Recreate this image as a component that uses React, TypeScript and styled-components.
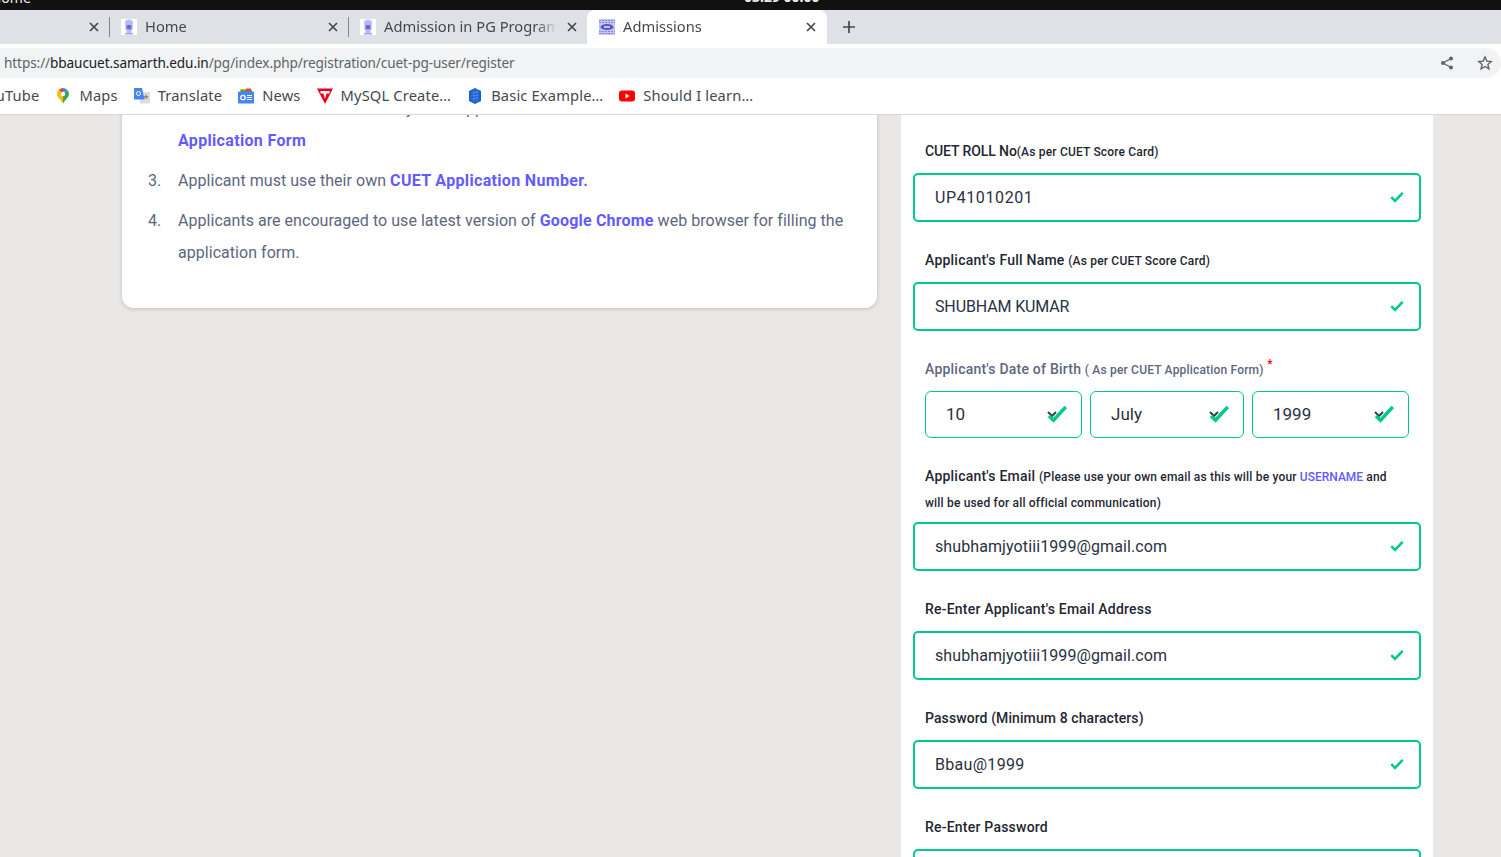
import React from "react";
import styled, { createGlobalStyle } from "styled-components";

const GlobalStyle = createGlobalStyle`
  html, body {
    margin: 0;
    padding: 0;
    height: 100%;
    overflow: hidden;
    background: #e9e8e6;
  }
  * { box-sizing: border-box; }
`;

const UI_FONT = `"Noto Sans", "Open Sans", sans-serif`;
const PAGE_FONT = `"Roboto", "Noto Sans", sans-serif`;
const GREEN = "#00c98d";

/* icons */
const CollegeIcon = () => (
  <svg width="16" height="16" viewBox="0 0 16 16">
    <rect width="16" height="16" fill="#fff" />
    <ellipse cx="8" cy="4" rx="4" ry="3.500" fill="#b9baf2" />
    <rect x="4.500" y="6" width="7" height="5" fill="#a3a4ee" />
    <circle cx="8" cy="8" r="2.200" fill="#6667d2" />
    <rect x="5.500" y="11" width="5" height="3" fill="#b9baf2" />
    <rect x="4" y="14" width="8" height="1.500" fill="#a3a4ee" />
  </svg>
);

const AdmissionsIcon = () => (
  <svg width="16" height="16" viewBox="0 0 16 16">
    <rect width="16" height="16" fill="#c4c5f3" />
    <path d="M0 1.500h16M0 3.500h16M0 12.500h16M0 14.500h16" stroke="#8788e0" strokeWidth="1" strokeDasharray="2 1" />
    <ellipse cx="8" cy="8" rx="6.500" ry="3" fill="#5556c6" />
    <rect x="5" y="7.200" width="6" height="1.600" fill="#dcdcf8" />
  </svg>
);

const CloseIcon = () => (
  <svg width="10" height="10" viewBox="0 0 10 10">
    <path d="M1 1l8 8M9 1l-8 8" stroke="#45494e" strokeWidth="1.700" fill="none" />
  </svg>
);

const PlusIcon = () => (
  <svg width="12" height="12" viewBox="0 0 12 12">
    <path d="M6 0v12M0 6h12" stroke="#45494e" strokeWidth="1.700" fill="none" />
  </svg>
);

const ShareIcon = () => (
  <svg width="14" height="14" viewBox="0 0 14 14">
    <path d="M11 2.500L3 7l8 4.500" stroke="#5f6368" strokeWidth="1.300" fill="none" />
    <circle cx="11" cy="2.500" r="2" fill="#5f6368" />
    <circle cx="3" cy="7" r="2" fill="#5f6368" />
    <circle cx="11" cy="11.500" r="2" fill="#5f6368" />
  </svg>
);

const StarIcon = () => (
  <svg width="16" height="16" viewBox="0 0 16 16">
    <path
      d="M8 2l1.800 4.100 4.400.4-3.300 2.900 1 4.400L8 11.500l-3.900 2.300 1-4.400L1.800 6.500l4.400-.4z"
      stroke="#5f6368"
      strokeWidth="1.400"
      fill="none"
    />
  </svg>
);

const MapsIcon = () => (
  <svg width="16" height="16" viewBox="0 0 16 16">
    <path d="M8 16C6.500 12 2 9.500 2 6a6 6 0 0 1 1.800-4.300L8 6z" fill="#fbbc04" />
    <path d="M8 16c1.500-4 6-6.500 6-10a6 6 0 0 0-1.800-4.300L8 6z" fill="#34a853" />
    <path d="M3.800 1.700A6 6 0 0 1 8 0v6z" fill="#ea4335" />
    <path d="M8 0a6 6 0 0 1 4.200 1.700L8 6z" fill="#4285f4" />
    <circle cx="8" cy="6" r="2.200" fill="#fff" />
  </svg>
);

const TranslateIcon = () => (
  <svg width="16" height="16" viewBox="0 0 16 16">
    <rect x="6" y="4" width="10" height="11.500" fill="#dadce0" />
    <path d="M0 0h8l2.500 11.500H0z" fill="#4285f4" />
    <path d="M12 6l.8 2h2l-1.500 1.300.5 2-1.800-1.200-1.800 1.200.5-2L9.200 8h2z" fill="#80868b" />
    <circle cx="4.500" cy="5.500" r="2" stroke="#fff" strokeWidth="1" fill="none" />
  </svg>
);

const NewsIcon = () => (
  <svg width="16" height="16" viewBox="0 0 16 16">
    <path d="M2 1h7v4H2z" fill="#fbbc04" />
    <path d="M3 2h11v3H3z" fill="#34a853" />
    <path d="M8 0.500h5v3H8z" fill="#ea4335" />
    <rect y="3.500" width="16" height="12" rx="1" fill="#4285f4" />
    <circle cx="5" cy="9.500" r="2.200" stroke="#fff" strokeWidth="1.300" fill="none" />
    <path d="M9 7.500h5M9 9.500h5M9 11.500h5" stroke="#fff" strokeWidth="1.100" />
  </svg>
);

const VivaldiTIcon = () => (
  <svg width="16" height="16" viewBox="0 0 16 16">
    <path d="M0 0.500h16L8 16z" fill="#e8001c" />
    <path d="M3.500 3h9v2.500H9.500L8 11 6.500 5.500h-3z" fill="#fff" />
  </svg>
);

const CubeIcon = () => (
  <svg width="16" height="16" viewBox="0 0 16 16">
    <path d="M8 0l6 3v10l-6 3-6-3V3z" fill="#1a5fd0" />
    <path d="M4 5l8-1M4 8l8-1M4 11l8-1M7 2v12M10 2v12" stroke="#6b9be8" strokeWidth=".6" />
  </svg>
);

const YoutubeIcon = () => (
  <svg width="16" height="16" viewBox="0 0 16 16">
    <rect y="2.500" width="16" height="11" rx="3" fill="#f00" />
    <path d="M6.500 5.500l4 2.500-4 2.500z" fill="#fff" />
  </svg>
);

const InputCheck = () => (
  <CheckSlot>
    <svg width="14" height="12" viewBox="0 0 14 12">
      <path d="M1.300 6.200l3.700 3.700 7.700-8" stroke={GREEN} strokeWidth="2.600" fill="none" />
    </svg>
  </CheckSlot>
);

const SelectCheck = () => (
  <svg width="21" height="19" viewBox="0 0 21 19">
    <path d="M2 8l4 4 4-4" stroke="#34404e" strokeWidth="2" fill="none" />
    <path d="M3 12l4.500 4.200L19.800 3" stroke={GREEN} strokeWidth="3.600" fill="none" />
  </svg>
);

/* data */
const tabs = [
  { title: "", icon: null },
  { title: "Home", icon: <CollegeIcon /> },
  { title: "Admission in PG Programme", icon: <CollegeIcon /> },
];

const bookmarks = [
  { title: "YouTube", icon: null },
  { title: "Maps", icon: <MapsIcon /> },
  { title: "Translate", icon: <TranslateIcon /> },
  { title: "News", icon: <NewsIcon /> },
  { title: "MySQL Create…", icon: <VivaldiTIcon /> },
  { title: "Basic Example…", icon: <CubeIcon /> },
  { title: "Should I learn…", icon: <YoutubeIcon /> },
];

const App = () => {
  return (
    <Page>
      <GlobalStyle />
      <SystemBar>
        <SystemTitle>Home</SystemTitle>
        <SystemClock>03:29 00:00</SystemClock>
      </SystemBar>

      <TabStrip>
        {tabs.map((tab, i) => (
          <Tab key={i}>
            <TabIcon>{tab.icon}</TabIcon>
            <TabTitle>{tab.title}</TabTitle>
            <TabClose><CloseIcon /></TabClose>
          </Tab>
        ))}
        <ActiveTab>
          <TabIcon><AdmissionsIcon /></TabIcon>
          <TabTitle>Admissions</TabTitle>
          <TabClose><CloseIcon /></TabClose>
        </ActiveTab>
        <NewTab><PlusIcon /></NewTab>
      </TabStrip>

      <AddressRow>
        <AddressPill>
          <Url>
            <UrlScheme>https://</UrlScheme>
            <UrlHost>bbaucuet.samarth.edu.in</UrlHost>
            /pg/index.php/registration/cuet-pg-user/register
          </Url>
          <AddressActions>
            <ShareIcon />
            <StarIcon />
          </AddressActions>
        </AddressPill>
      </AddressRow>

      <BookmarkBar>
        {bookmarks.map((b) => (
          <Bookmark key={b.title}>
            {b.icon}
            <span>{b.title}</span>
          </Bookmark>
        ))}
      </BookmarkBar>

      <Viewport>
        <InfoCard>
          <InfoList>
            <InfoItem $num="2.">
              Details entered should be exactly as in Applicant's CUET
              <br />
              <Strong>Application Form</Strong>
            </InfoItem>
            <InfoItem $num="3.">
              Applicant must use their own <Strong>CUET Application Number.</Strong>
            </InfoItem>
            <InfoItem $num="4.">
              Applicants are encouraged to use latest version of <Strong $narrow>Google Chrome</Strong> web browser for filling the application form.
            </InfoItem>
          </InfoList>
        </InfoCard>

        <FormCard>
          <Label><Caps>CUET ROLL No</Caps><Small>(As per CUET Score Card)</Small></Label>
          <Field>
            <FieldValue $ls={0.6}>UP41010201</FieldValue>
            <InputCheck />
          </Field>

          <Label>Applicant's Full Name <Small>(As per CUET Score Card)</Small></Label>
          <Field>
            <FieldValue $ls={-0.13}>SHUBHAM KUMAR</FieldValue>
            <InputCheck />
          </Field>

          <Label $muted>
            Applicant's Date of Birth <Small>( As per CUET Application Form)</Small> <Required>*</Required>
          </Label>
          <DateRow>
            <DateSelect $width={157}>
              <span>10</span>
              <SelectCheck />
            </DateSelect>
            <DateSelect $width={154}>
              <span>July</span>
              <SelectCheck />
            </DateSelect>
            <DateSelect $width={157}>
              <span>1999</span>
              <SelectCheck />
            </DateSelect>
          </DateRow>

          <Label $tight>
            Applicant's Email <Small>(Please use your own email as this will be your <Accent>USERNAME</Accent> and<br />will be used for all official communication)</Small>
          </Label>
          <Field>
            <FieldValue>shubhamjyotiii1999@gmail.com</FieldValue>
            <InputCheck />
          </Field>

          <Label>Re-Enter Applicant's Email Address</Label>
          <Field>
            <FieldValue>shubhamjyotiii1999@gmail.com</FieldValue>
            <InputCheck />
          </Field>

          <Label $narrow>Password (Minimum 8 characters)</Label>
          <Field>
            <FieldValue $ls={0.3}>Bbau@1999</FieldValue>
            <InputCheck />
          </Field>

          <Label>Re-Enter Password</Label>
          <Field />
        </FormCard>
      </Viewport>
    </Page>
  );
};

export default App;

/* styles */
const Page = styled.div`
  width: 1501px;
  height: 857px;
  overflow: hidden;
  display: flex;
  flex-direction: column;
  background: #e9e8e6;
`;

const SystemBar = styled.div`
  height: 10px;
  flex: none;
  background: #111;
  position: relative;
  overflow: hidden;
  color: #eee;
  font: 700 14px/14px ${UI_FONT};
`;

const SystemTitle = styled.span`
  position: absolute;
  left: -9px;
  top: -9px;
  font-weight: 400;
`;

const SystemClock = styled.span`
  position: absolute;
  left: 744px;
  top: -10px;
`;

const TabStrip = styled.div`
  height: 34px;
  flex: none;
  background: #dee1e6;
  display: flex;
  margin-left: -130px;
  width: 1631px;
  font: 400 14.7px/34px ${UI_FONT};
  color: #45494e;
`;

const Tab = styled.div`
  width: 239px;
  height: 34px;
  display: flex;
  align-items: center;
  padding: 0 10px 0 12px;
  position: relative;

  &:not(:nth-child(3))::after {
    content: "";
    position: absolute;
    right: -1px;
    top: 7px;
    height: 20px;
    width: 1px;
    background: #80868b;
  }
`;

const ActiveTab = styled(Tab)`
  width: 240px;
  padding-right: 11px;
  background: #fff;
  border-radius: 8px 8px 0 0;

  &:not(:nth-child(3))::after {
    display: none;
  }
`;

const TabIcon = styled.span`
  width: 16px;
  height: 16px;
  flex: none;
  margin-right: 8px;
  display: flex;
`;

const TabTitle = styled.span`
  flex: 1;
  white-space: nowrap;
  overflow: hidden;
  min-width: 0;
  padding-bottom: 2px;
  mask-image: linear-gradient(to right, #000 88%, transparent);
`;

const TabClose = styled.span`
  width: 10px;
  height: 10px;
  flex: none;
  margin-left: 10px;
  display: flex;
`;

const NewTab = styled.span`
  width: 44px;
  height: 34px;
  display: flex;
  align-items: center;
  justify-content: center;
`;

const AddressRow = styled.div`
  height: 34px;
  flex: none;
  background: #fff;
  padding-top: 4px;
`;

const AddressPill = styled.div`
  height: 30px;
  width: 1501px;
  background: #f1f3f4;
  border-radius: 0 15px 15px 0;
  display: flex;
  align-items: center;
  justify-content: space-between;
  padding: 0 8px 0 4px;
`;

const Url = styled.div`
  font: 400 13.6px/30px ${UI_FONT};
  color: #5f6368;
  letter-spacing: -0.1px;
`;

const UrlScheme = styled.span`
  color: #5f6368;
`;

const UrlHost = styled.span`
  color: #202124;
`;

const AddressActions = styled.div`
  display: flex;
  align-items: center;
  gap: 23px;
`;

const BookmarkBar = styled.div`
  height: 37px;
  flex: none;
  background: #fff;
  border-bottom: 1px solid #d8d8d8;
  display: flex;
  align-items: center;
  gap: 16px;
  margin-left: -21px;
  width: 1522px;
  font: 400 14.7px/20px ${UI_FONT};
  letter-spacing: 0.15px;
  color: #45494e;

  span {
    padding-bottom: 2px;
  }
`;

const Bookmark = styled.div`
  display: flex;
  align-items: center;
  gap: 8px;
  white-space: nowrap;
`;

const Viewport = styled.div`
  flex: 1;
  min-height: 0;
  overflow: hidden;
  display: flex;
  align-items: flex-start;
  padding-left: 122px;
  gap: 24px;
  font-family: ${PAGE_FONT};
`;

const InfoCard = styled.div`
  width: 755px;
  flex: none;
  margin-top: -115px;
  background: #fff;
  border-radius: 12px;
  box-shadow: 0 1px 4px rgba(0, 0, 0, 0.18);
  padding: 93px 24px 39px 56px;
`;

const InfoList = styled.div`
  display: flex;
  flex-direction: column;
  gap: 8px;
`;

const InfoItem = styled.div<{ $num: string }>`
  position: relative;
  font-size: 16px;
  line-height: 32px;
  letter-spacing: 0.04px;
  color: #5e6680;

  &::before {
    content: "${(p) => p.$num}";
    position: absolute;
    left: -30px;
    top: 0;
  }
`;

const Strong = styled.strong<{ $narrow?: boolean }>`
  font-weight: 700;
  letter-spacing: ${(p) => (p.$narrow ? "0.18px" : "0.33px")};
  color: #635bff;
`;

const FormCard = styled.div`
  width: 532px;
  flex: none;
  background: #fff;
  padding: 23px 12px 0;
`;

const Label = styled.div<{ $muted?: boolean; $tight?: boolean; $narrow?: boolean }>`
  padding: 0 12px;
  margin-bottom: ${(p) => (p.$tight ? "7px" : "9px")};
  font-size: 14px;
  font-weight: 500;
  line-height: 26px;
  letter-spacing: ${(p) => (p.$narrow ? "0.09px" : "0.22px")};
  color: ${(p) => (p.$muted ? "#5e6680" : "#1f2733")};
`;

const Caps = styled.span`
  letter-spacing: -0.1px;
`;

const Small = styled.span`
  font-size: 12px;
  line-height: 1;
  letter-spacing: 0.18px;
`;

const Accent = styled.span`
  letter-spacing: 0;
  color: #635bff;
`;

const Required = styled.sup`
  color: #f00;
  font-size: 12px;
  line-height: 0;
`;

const Field = styled.div`
  height: 49px;
  margin-bottom: 25px;
  border: 2px solid ${GREEN};
  border-radius: 5px;
  display: flex;
  align-items: center;
  justify-content: space-between;
  padding: 0 15px 0 20px;
`;

const FieldValue = styled.span<{ $ls?: number }>`
  font-size: 16px;
  letter-spacing: ${(p) => p.$ls ?? 0.1}px;
  color: #2a3140;
`;

const CheckSlot = styled.span`
  display: flex;
  margin-bottom: 2px;
`;

const DateRow = styled.div`
  display: flex;
  gap: 8px;
  padding: 0 12px;
  margin-bottom: 25px;
`;

const DateSelect = styled.div<{ $width: number }>`
  width: ${(p) => p.$width}px;
  height: 47px;
  border: 1px solid ${GREEN};
  border-radius: 6px;
  display: flex;
  align-items: center;
  justify-content: space-between;
  padding: 0 14px 2px 20px;
  font-size: 17px;
  color: #2a3140;
`;
